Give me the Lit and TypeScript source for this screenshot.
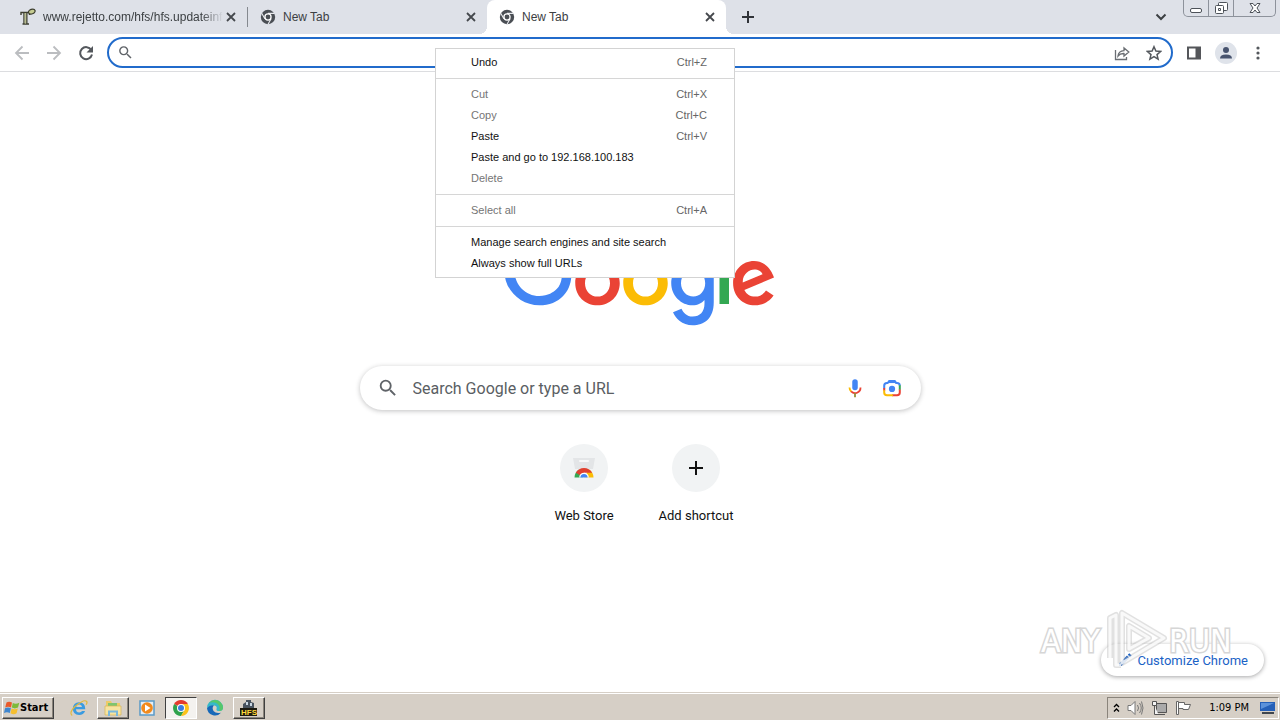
import { LitElement, html, css, nothing } from "lit";
import { customElement } from "lit/decorators.js";
import { classMap } from "lit/directives/class-map.js";

const chromeMono = html`<svg width="16" height="16" viewBox="0 0 16 16" aria-hidden="true">
  <circle cx="8" cy="8" r="7.2" fill="#4a4e54" />
  <g stroke="#e8eaee" stroke-width="1.1" fill="none"><path d="M8 4.4h6.6M4.9 9.8 1.7 4.3M11.1 9.8 7.9 15.4" /></g>
  <circle cx="8" cy="8" r="3.7" fill="#fff" /><circle cx="8" cy="8" r="2.4" fill="#4a4e54" />
</svg>`;

const rejetto = html`<svg width="16" height="18" viewBox="0 0 16 18" aria-hidden="true">
  <path d="M1 7V4.500h8.500V7M4 5v10.500M6.800 5v10.500M2.500 16h6.500" fill="none" stroke="#3d3f30" stroke-width="1.400" />
  <path d="M5.400 5v10.500" stroke="#b9bd8e" stroke-width="1.600" />
  <ellipse cx="11.800" cy="3.600" rx="3.400" ry="2.300" transform="rotate(-18 11.800 3.600)" fill="#c6cc91" stroke="#3d3f30" stroke-width="1.200" />
</svg>`;

const magnifier = (size: number) => html`<svg width=${size} height=${size} viewBox="0 0 24 24" fill="#5f6368" aria-hidden="true">
  <path d="M15.500 14h-.79l-.28-.27A6.470 6.470 0 0 0 16 9.500 6.500 6.500 0 1 0 9.500 16c1.610 0 3.090-.59 4.230-1.570l.27.28v.79l5 4.990L20.490 19l-4.990-5zm-6 0C7.010 14 5 11.990 5 9.500S7.010 5 9.500 5 14 7.010 14 9.500 11.990 14 9.500 14z" />
</svg>`;

const googleLogo = html`<svg class="logo" width="272" height="92" viewBox="0 0 272 92" role="img" aria-label="Google">
  <path fill="#EA4335" d="M115.750 47.180c0 12.770-9.990 22.180-22.250 22.180s-22.250-9.410-22.250-22.180C71.250 34.320 81.240 25 93.500 25s22.250 9.320 22.250 22.180zm-9.740 0c0-7.980-5.790-13.440-12.510-13.440S80.990 39.200 80.990 47.180c0 7.900 5.790 13.440 12.510 13.440s12.510-5.550 12.510-13.440z" />
  <path fill="#FBBC05" d="M163.750 47.180c0 12.770-9.990 22.180-22.250 22.180s-22.250-9.410-22.250-22.180c0-12.850 9.990-22.180 22.250-22.180s22.250 9.320 22.250 22.180zm-9.740 0c0-7.980-5.790-13.440-12.510-13.440s-12.510 5.460-12.510 13.440c0 7.900 5.790 13.440 12.510 13.440s12.510-5.550 12.510-13.440z" />
  <path fill="#4285F4" d="M209.750 26.340v39.820c0 16.380-9.660 23.070-21.080 23.070-10.750 0-17.220-7.190-19.660-13.070l8.480-3.530c1.510 3.610 5.210 7.870 11.170 7.870 7.310 0 11.840-4.510 11.840-13v-3.190h-.34c-2.180 2.690-6.380 5.040-11.680 5.040-11.090 0-21.250-9.660-21.250-22.090 0-12.520 10.160-22.260 21.250-22.260 5.290 0 9.490 2.350 11.680 4.960h.34v-3.610h9.250zm-8.560 20.920c0-7.810-5.210-13.520-11.840-13.520-6.720 0-12.350 5.710-12.350 13.520 0 7.730 5.630 13.360 12.350 13.360 6.630 0 11.840-5.630 11.840-13.360z" />
  <path fill="#34A853" d="M225 3v65h-9.500V3h9.500z" />
  <path fill="#EA4335" d="M262.020 54.480l7.560 5.040c-2.440 3.610-8.320 9.830-18.480 9.830-12.600 0-22.010-9.740-22.010-22.180 0-13.190 9.490-22.180 20.920-22.180 11.510 0 17.140 9.160 18.980 14.110l1.010 2.520-29.650 12.280c2.270 4.450 5.800 6.720 10.750 6.720 4.960 0 8.400-2.440 10.920-6.140zm-23.270-7.980l19.820-8.230c-1.090-2.770-4.370-4.700-8.230-4.700-4.950 0-11.840 4.370-11.590 12.930z" />
  <path fill="#4285F4" d="M35.290 41.410V32H67c.31 1.640.47 3.580.47 5.680 0 7.060-1.930 15.790-8.150 22.010-6.050 6.300-13.780 9.660-24.020 9.660C16.320 69.350.36 53.890.36 34.910.36 15.930 16.320.47 35.300.47c10.500 0 17.980 4.120 23.600 9.490l-6.640 6.640c-4.030-3.780-9.490-6.720-16.970-6.720-13.860 0-24.700 11.170-24.700 25.030 0 13.860 10.840 25.030 24.700 25.030 8.990 0 14.110-3.610 17.390-6.890 2.660-2.660 4.410-6.460 5.100-11.650l-22.490.01z" />
</svg>`;

const mic = html`<svg width="22" height="22" viewBox="0 0 24 24" aria-hidden="true">
  <rect x="9" y="2.500" width="6" height="12" rx="3" fill="#4285f4" />
  <path d="M6 11.500a6 6 0 0 0 1.900 4.400" fill="none" stroke="#fbbc05" stroke-width="2" />
  <path d="M7.700 15.800A6 6 0 0 0 18 11.500" fill="none" stroke="#ea4335" stroke-width="2" />
  <path d="M12 17.500V22" stroke="#9a8f3a" stroke-width="2" />
</svg>`;

const lens = html`<svg width="22" height="22" viewBox="0 0 24 24" fill="none" stroke-width="2.200" aria-hidden="true">
  <path d="M3.500 12.500V9.500a3 3 0 0 1 3-3H8" stroke="#4285f4" />
  <path d="M7.500 6.500 9 4.500h6l1.500 2h1a3 3 0 0 1 3 3" stroke="#4285f4" fill="#4285f4" fill-opacity=".001" />
  <path d="M8.500 5.500h7" stroke="#4285f4" />
  <path d="M20.500 9v5" stroke="#34a853" /><path d="M20.500 13.500v3.500a3 3 0 0 1-3 3H12" stroke="#ea4335" />
  <path d="M3.500 12v3" stroke="#ea4335" /><path d="M3.500 14.500V17a3 3 0 0 0 3 3H13" stroke="#fbbc05" />
  <circle cx="12" cy="13" r="3.400" fill="#4285f4" />
</svg>`;

const webStore = html`<svg width="24" height="24" viewBox="0 0 24 24" aria-hidden="true">
  <path d="M1 2h22l-2 11H3z" fill="#e3e5e7" /><path d="M8 5h8" stroke="#f8f8f8" stroke-width="2" stroke-linecap="round" />
  <path d="M2.500 21.500A9.500 9.500 0 0 1 7 13.500l4 8z" fill="#34a853" />
  <path d="M17 13.500a9.500 9.500 0 0 1 4.500 8H12z" fill="#fbbc05" />
  <path d="M3.800 16.700a9.500 9.500 0 0 1 16.400 0H12l-3 3z" fill="#e0402f" />
  <path d="M7.200 21.500a4.800 4.800 0 0 1 9.600 0z" fill="#fff" /><path d="M8.400 21.500a3.600 3.600 0 0 1 7.200 0z" fill="#4285f4" />
</svg>`;

const windowsFlag = html`<svg width="16" height="16" viewBox="0 0 16 16" aria-hidden="true">
  <path d="M2.500 2.500Q5 1 8 2.600L7 7.400Q4.200 6 1.200 7.400z" fill="#ea5a2a" />
  <path d="M8.800 3q3 1.500 6.500-.3L14 7.600q-3.300 1.600-6.200 0z" fill="#7dba3a" />
  <path d="M1 8.200Q4 6.800 6.900 8.200L5.800 13Q3 11.700 0 13z" fill="#3f86cf" />
  <path d="M7.600 8.500q3 1.400 6.200 0L12.600 13.300q-3 1.700-6.100 0z" fill="#f6bf30" />
</svg>`;

const taskIcons = {
  ie: html`<svg width="20" height="20" viewBox="0 0 20 20" aria-hidden="true">
    <path d="M16.300 11.300H7q.2 3.200 3.200 3.200 2 0 2.900-1.400h3q-1.500 4-6 4-6.300-.4-6.300-6.600.3-6 6.300-6.300 6.400.3 6.200 7.100zM7.100 9h5.900q-.3-2.600-2.900-2.600T7.100 9z" fill="#3a9be0" />
    <path d="M3.200 17.600Q-.5 15 6 8.500 15 1 17.500 3.200q1.200 1-.4 3.500" fill="none" stroke="#e0b93c" stroke-width="1.200" />
  </svg>`,
  folder: html`<svg width="20" height="20" viewBox="0 0 20 20" aria-hidden="true">
    <path d="M3 3h5l1 2h8v12H3z" fill="#edcb67" /><path d="M5 5h9v4H5z" fill="#7fc56f" />
    <path d="M2 8h16v9H2z" fill="#f7e4a0" stroke="#d8b455" stroke-width=".7" />
    <path d="M6 18v-4.500h8V18" fill="none" stroke="#79b8dc" stroke-width="2" />
  </svg>`,
  player: html`<svg width="20" height="20" viewBox="0 0 20 20" aria-hidden="true">
    <path d="M3 3h14v14H3z" fill="#e4eef6" stroke="#5a9bc7" stroke-width="1.500" />
    <circle cx="10" cy="10" r="5.800" fill="#f28a1c" /><path d="m8 6.500 5.500 3.500L8 13.500z" fill="#fff" />
  </svg>`,
  chrome: html`<svg width="20" height="20" viewBox="0 0 20 20" aria-hidden="true">
    <path d="M10 10 3.100 6A8 8 0 0 1 16.900 6z" fill="#e33b2e" />
    <path d="M10 10 3.100 6A8 8 0 0 0 10 18l3.500-6z" fill="#2fa24c" />
    <path d="M10 6h6.900A8 8 0 0 1 10 18l3.500-6z" fill="#fcc21b" />
    <circle cx="10" cy="10" r="4" fill="#fff" /><circle cx="10" cy="10" r="3" fill="#3b7de0" />
  </svg>`,
  edge: html`<svg width="20" height="20" viewBox="0 0 20 20" aria-hidden="true">
    <path d="M2 10a8 8 0 0 1 16-.5q0 3.500-4 3.500-3 0-2.500-2 1-3-2-3.500Q5 7 2 10z" fill="#35b8c9" />
    <path d="M10 2a8 8 0 0 1 8 7.500q0 3.500-4 3.500 2-5-2-7.500-4-2-8-.500A8 8 0 0 1 10 2z" fill="#56c76a" />
    <path d="M2 10q3-3.500 7-2.500-2.500 2-.5 5.500 2.500 3 7.500 1.700A8 8 0 0 1 2 10z" fill="#1768b8" />
  </svg>`,
  hfs: html`<svg width="20" height="20" viewBox="0 0 20 20" aria-hidden="true">
    <path d="M4 11V6l3-2V2h5v2l3 1v6z" fill="#47525e" /><path d="M7 4h2v3H7zm4 1h2v3h-2z" fill="#c9d6e2" />
    <path d="M1 10h17v8H1z" fill="#1c1a10" />
    <text x="10" y="17" text-anchor="middle" font-family="Liberation Sans" font-weight="700" font-size="8" fill="#ffd83a">HFS</text>
  </svg>`,
};

interface MenuEntry {
  label: string;
  keys?: string;
  off?: boolean;
}

const menuGroups: MenuEntry[][] = [
  [{ label: "Undo", keys: "Ctrl+Z" }],
  [
    { label: "Cut", keys: "Ctrl+X", off: true },
    { label: "Copy", keys: "Ctrl+C", off: true },
    { label: "Paste", keys: "Ctrl+V" },
    { label: "Paste and go to 192.168.100.183" },
    { label: "Delete", off: true },
  ],
  [{ label: "Select all", keys: "Ctrl+A", off: true }],
  [{ label: "Manage search engines and site search" }, { label: "Always show full URLs" }],
];

const reset = css`
  :host, * { box-sizing: border-box; }
  button { font: inherit; color: inherit; background: none; border: 0; padding: 0; margin: 0; }
  svg { display: block; flex: none; }
`;

@customElement("tab-strip")
class TabStrip extends LitElement {
  static styles = [reset, css`
    :host { display: flex; height: 34px; background: #dee1e8; padding-left: 8px; color: #3c4043; }
    .tabs { display: flex; flex: 0 1 718px; min-width: 0; }
    .tab { flex: 1; min-width: 0; display: flex; align-items: center; padding: 0 8px 0 12px; position: relative; }
    .title { flex: 1; min-width: 0; margin-left: 7px; overflow: hidden; white-space: nowrap; line-height: 16px; }
    .long { -webkit-mask-image: linear-gradient(to right, #000 88%, transparent); mask-image: linear-gradient(to right, #000 88%, transparent); }
    .ruled { border-right: 1px solid #85898f; height: 20px; margin-top: 7px; }
    .active { background: #fff; border-radius: 8px 8px 0 0; }
    .active::before, .active::after { content: ""; position: absolute; bottom: 0; width: 8px; height: 8px; }
    .active::before { right: 100%; background: radial-gradient(circle at 0 0, transparent 8px, #fff 8px); }
    .active::after { left: 100%; background: radial-gradient(circle at 100% 0, transparent 8px, #fff 8px); }
    .close { width: 16px; height: 16px; }
    .plus { width: 28px; margin-left: 8px; display: grid; place-items: center; }
    .gap { flex: 1; }
    .search { width: 28px; display: grid; place-items: center; margin-right: 8px; }
    .frame { display: flex; height: 17px; margin-right: 4px; border: 1px solid #8d929b; border-top: 0; border-radius: 0 0 5px 5px; }
    .frame button { width: 25px; display: grid; place-items: center; border-right: 1px solid #8d929b; }
    .frame button:last-child { width: 41px; border-right: 0; }
  `];
  render() {
    const cross = html`<button class="close" aria-label="Close tab"><svg width="16" height="16" viewBox="0 0 16 16" stroke="#45484d" stroke-width="1.800"><path d="m4 4 8 8m0-8-8 8" /></svg></button>`;
    return html`
      <div class="tabs" role="tablist">
        <div class="tab ruled" role="tab">${rejetto}<span class="title long">www.rejetto.com/hfs/hfs.updateinfo</span>${cross}</div>
        <div class="tab" role="tab">${chromeMono}<span class="title">New Tab</span>${cross}</div>
        <div class="tab active" role="tab" aria-selected="true">${chromeMono}<span class="title">New Tab</span>${cross}</div>
      </div>
      <button class="plus" aria-label="New tab"><svg width="14" height="14" viewBox="0 0 14 14" stroke="#303338" stroke-width="2"><path d="M7 1v12M1 7h12" /></svg></button>
      <span class="gap"></span>
      <button class="search" aria-label="Search tabs"><svg width="12" height="8" viewBox="0 0 12 8" fill="none" stroke="#3c4043" stroke-width="2"><path d="m1.500 1.500 4.500 4.500 4.500-4.500" /></svg></button>
      <div class="frame">
        <button aria-label="Minimize"><svg width="14" height="16" viewBox="0 0 14 16"><rect x="1.500" y="8.500" width="11" height="4" rx="1.500" fill="#fff" stroke="#4d5259" /></svg></button>
        <button aria-label="Restore"><svg width="14" height="16" viewBox="0 0 14 16" fill="#fff" stroke="#4d5259"><rect x="4.500" y="2.500" width="9" height="8" rx="1" /><rect x="1.500" y="5.500" width="8" height="8" rx="1" /><path d="M4.500 8.500h2v2h-2z" /></svg></button>
        <button aria-label="Close"><svg width="12" height="16" viewBox="0 0 12 16" fill="#fff" stroke="#4d5259"><path d="M1 3.500h3l2 2.500 2-2.500h3L8 8l3 4.500H8L6 10l-2 2.500H1L4 8z" /></svg></button>
      </div>`;
  }
}

@customElement("nav-bar")
class NavBar extends LitElement {
  static styles = [reset, css`
    :host { display: flex; align-items: center; height: 38px; background: #fff; border-bottom: 1px solid #dcdde0; padding: 0 6px; }
    button { width: 32px; height: 28px; display: grid; place-items: center; }
    .omnibox { flex: 1; min-width: 0; display: flex; align-items: center; height: 31px; margin: 0 5px; padding: 0 1px 0 8px; border: 2px solid #216bcb; border-radius: 16px; }
    input { flex: 1; min-width: 0; border: 0; outline: 0; background: none; font: inherit; margin: 0 8px; padding: 0; }
    .avatar { width: 22px; height: 22px; border-radius: 50%; background: #dfe3ea; display: grid; place-items: center; }
  `];
  render() {
    return html`
      <button aria-label="Back"><svg width="16" height="16" viewBox="0 0 16 16" fill="none" stroke="#bbbdc0" stroke-width="1.800"><path d="M15 8H2m6.500-6.500L2 8l6.500 6.500" /></svg></button>
      <button aria-label="Forward"><svg width="16" height="16" viewBox="0 0 16 16" fill="none" stroke="#bbbdc0" stroke-width="1.800"><path d="M1 8h13M7.500 1.500 14 8l-6.500 6.500" /></svg></button>
      <button aria-label="Reload"><svg width="16" height="16" viewBox="0 0 16 16" fill="none" stroke="#54585d" stroke-width="2"><path d="M13.300 5A6 6 0 1 0 14 9.500" /><path d="M15 1v6.500H8.500z" fill="#54585d" stroke="none" /></svg></button>
      <div class="omnibox">${magnifier(17)}<input type="text" aria-label="Address and search bar" />
        <button aria-label="Share"><svg width="16" height="16" viewBox="0 0 16 16" fill="none" stroke="#6a6e73" stroke-width="1.300"><path d="M1.500 5v9.500h11V12M4 11q.5-5 6-5.300V3l4.800 4-4.800 4V8.500Q6 8.300 4 11z" /></svg></button>
        <button aria-label="Bookmark this tab"><svg width="16" height="16" viewBox="0 0 16 16" fill="none" stroke="#54585d" stroke-width="1.500"><path d="m8 1.700 1.900 4.400 4.700.4-3.600 3.100 1.100 4.600L8 11.700l-4.100 2.500L5 9.600 1.400 6.500l4.700-.4z" /></svg></button>
      </div>
      <button aria-label="Side panel"><svg width="16" height="16" viewBox="0 0 16 16"><path d="M1 1.500h14v13H1z" fill="#54565a" /><path d="M3 3.500h6.500v9H3z" fill="#fff" /></svg></button>
      <button aria-label="Profile"><span class="avatar"><svg width="14" height="14" viewBox="0 0 14 14" fill="#47536e"><circle cx="7" cy="4" r="3" /><path d="M1 12.500q0-4 6-4t6 4z" /></svg></span></button>
      <button aria-label="Menu"><svg width="4" height="14" viewBox="0 0 4 14" fill="#54585d"><circle cx="2" cy="2" r="1.600" /><circle cx="2" cy="7" r="1.600" /><circle cx="2" cy="12" r="1.600" /></svg></button>`;
  }
}

@customElement("context-menu")
class ContextMenu extends LitElement {
  static styles = [reset, css`
    :host { display: block; width: 300px; background: #fff; border: 1px solid #d3d3d3; padding: 3px 0; color: #111; font-size: 11px; }
    button { display: flex; justify-content: space-between; align-items: center; width: 100%; height: 21px; padding: 0 27px 0 35px; line-height: 21px; white-space: nowrap; }
    button:disabled { color: #757575; }
    .keys { color: #666; }
    hr { border: 0; height: 1px; background: #d6d6d6; margin: 5px 0; }
  `];
  render() {
    return menuGroups.map((group, i) => html`
      ${i ? html`<hr />` : nothing}
      ${group.map((m) => html`<button role="menuitem" ?disabled=${m.off}><span>${m.label}</span><span class="keys">${m.keys ?? nothing}</span></button>`)}`);
  }
}

@customElement("new-tab-page")
class NewTabPage extends LitElement {
  static styles = [reset, css`
    :host { display: flex; flex-direction: column; align-items: center; flex: 1; min-height: 0; position: relative; padding-top: 164px; background: #fff; font-family: Roboto, "Liberation Sans", sans-serif; }
    .search { display: flex; align-items: center; width: 561px; max-width: 90%; height: 44px; margin-top: 38px; padding: 0 16px 0 17px; border-radius: 22px; background: #fff; box-shadow: 0 1px 5px rgba(32, 33, 36, 0.28); }
    input { flex: 1; min-width: 0; margin-left: 14px; padding: 0; border: 0; outline: 0; background: none; font: inherit; font-size: 16px; }
    input::placeholder { color: #5a5e63; opacity: 1; }
    .search button { width: 26px; height: 26px; display: grid; place-items: center; margin-left: 11px; }
    .tiles { display: flex; margin-top: 34px; }
    .tile { width: 112px; display: flex; flex-direction: column; align-items: center; color: #111; text-decoration: none; font-size: 13px; line-height: 16px; }
    .disc { width: 48px; height: 48px; margin-bottom: 16px; border-radius: 50%; background: #f1f3f4; display: grid; place-items: center; }
    .customize { position: absolute; right: 16px; bottom: 16px; height: 32px; padding: 0 16px; display: flex; align-items: center; gap: 4px; border-radius: 16px; background: #fff; box-shadow: 0 1px 4px rgba(32, 33, 36, 0.4); color: #1a62c6; font-size: 13px; }
    .mark { position: absolute; right: 46px; bottom: 16px; pointer-events: none; }
  `];
  render() {
    const play = "M74 50V10l6-3v50l5 0M86 5v50l42-25zM93 18v23l20-11z";
    return html`
      ${googleLogo}
      <form class="search" role="search">${magnifier(22)}
        <input type="text" aria-label="Search Google or type a URL" placeholder="Search Google or type a URL" />
        <button type="button" aria-label="Search by voice">${mic}</button>
        <button type="button" aria-label="Search by image">${lens}</button>
      </form>
      <div class="tiles">
        <a class="tile" href="#store"><span class="disc">${webStore}</span>Web Store</a>
        <button class="tile"><span class="disc"><svg width="14" height="14" viewBox="0 0 14 14" stroke="#111" stroke-width="2"><path d="M7 0v14M0 7h14" /></svg></span>Add shortcut</button>
      </div>
      <button class="customize"><svg width="16" height="16" viewBox="0 0 16 16" fill="#1a62c6"><path d="M2 11.500 10 3.500l2.500 2.500-8 8H2zM10.800 2.700 12.300 1.200l2.500 2.500-1.500 1.500z" /></svg>Customize Chrome</button>
      <svg class="mark" width="198" height="68" viewBox="0 0 198 68" role="img" aria-label="ANY RUN">
        <g fill="none" stroke="#b4b4b4" stroke-opacity=".4" stroke-width="6" stroke-linejoin="round"><path d=${play} /></g>
        <g fill="none" stroke="#fff" stroke-opacity=".8" stroke-width="3" stroke-linejoin="round"><path d=${play} /></g>
        <g font-family="DejaVu Sans Condensed, DejaVu Sans, sans-serif" font-size="32" fill="#fff" stroke="#d6d6d6" stroke-width="3" paint-order="stroke">
          <text x="5" y="44">ANY</text><text x="133" y="44">RUN</text>
        </g>
      </svg>`;
  }
}

@customElement("task-bar")
class TaskBar extends LitElement {
  static styles = [reset, css`
    :host { display: flex; align-items: center; height: 28px; padding: 3px 1px 1px 2px; background: #d6cfc6; border-top: 1px solid #d6cfc6; box-shadow: inset 0 1px #fff; font-size: 11px; color: #000; }
    .start, .raised { border: 1px solid; border-color: #fff #404040 #404040 #fff; box-shadow: inset -1px -1px #8a847b; }
    .start { display: flex; align-items: center; height: 22px; width: 52px; padding-left: 1px; font-weight: 700; }
    .apps { display: flex; align-items: center; gap: 2px; margin-left: 9px; }
    .app { width: 32px; height: 22px; display: grid; place-items: center; }
    .sunken { border: 1px solid; border-color: #404040 #fff #fff #404040; background: #f4f2ef; }
    .tray { display: flex; align-items: center; gap: 7px; height: 22px; margin-left: auto; padding: 0 2px 0 5px; border: 1px solid; border-color: #8a847b #fff #fff #8a847b; }
    .time { margin: 0 4px 0 10px; }
  `];
  render() {
    const app = (name: keyof typeof taskIcons, look = "") =>
      html`<button class=${classMap({ app: true, raised: look === "raised", sunken: look === "sunken" })} aria-label=${name}>${taskIcons[name]}</button>`;
    return html`
      <button class="start">${windowsFlag}<span>Start</span></button>
      <div class="apps">${app("ie")}${app("folder", "raised")}${app("player")}${app("chrome", "sunken")}${app("edge")}${app("hfs", "raised")}</div>
      <div class="tray">
        <svg width="7" height="10" viewBox="0 0 7 10" fill="none" stroke="#000" stroke-width="1.300"><path d="m1 4 2.500-2.500L6 4M1 8.500 3.500 6 6 8.500" /></svg>
        <svg width="17" height="16" viewBox="0 0 17 16" fill="#fff" stroke="#777" stroke-width="1"><path d="M1 5.500h3l4-4v13l-4-4H1z" /><path d="M10.500 5q2 3 0 6M12.500 3q3.500 5 0 10M14.500 1.500q3 6.500 0 13" fill="none" /></svg>
        <svg width="17" height="16" viewBox="0 0 17 16" fill="#f4f4f4" stroke="#555"><path d="M5.500 3.500h10v9h-10z" fill="#aaa" /><path d="M7 14.500h7M1.500 1.500h4v4h-4zM3.500 5.500v9h4" /></svg>
        <svg width="17" height="16" viewBox="0 0 17 16" fill="#fff" stroke="#666"><path d="M1.500 1.500h2v13h-2zM3.500 2.500h6v2h6l-2 5H8v-1H3.500z" /></svg>
        <span class="time">1:09 PM</span>
        <svg width="16" height="14" viewBox="0 0 16 14"><path d="M0 1h15v9H0z" fill="#2560b8" /><path d="M1 2h13L1 8z" fill="#5c92da" /><path d="M2 11h12v2H2z" fill="#40464e" /></svg>
      </div>`;
  }
}

@customElement("app-root")
class AppRoot extends LitElement {
  static styles = css`
    :host { display: flex; flex-direction: column; height: 100vh; overflow: hidden; position: relative; font: 11px "DejaVu Sans Condensed", "DejaVu Sans", sans-serif; }
    tab-strip { font-family: "Liberation Sans", sans-serif; font-size: 12px; }
    context-menu { position: absolute; left: 435px; top: 48px; z-index: 2; font-family: "Liberation Sans", sans-serif; }
  `;
  render() {
    return html`<tab-strip></tab-strip><nav-bar></nav-bar><new-tab-page></new-tab-page><task-bar></task-bar>
      <context-menu role="menu"></context-menu>`;
  }
}
